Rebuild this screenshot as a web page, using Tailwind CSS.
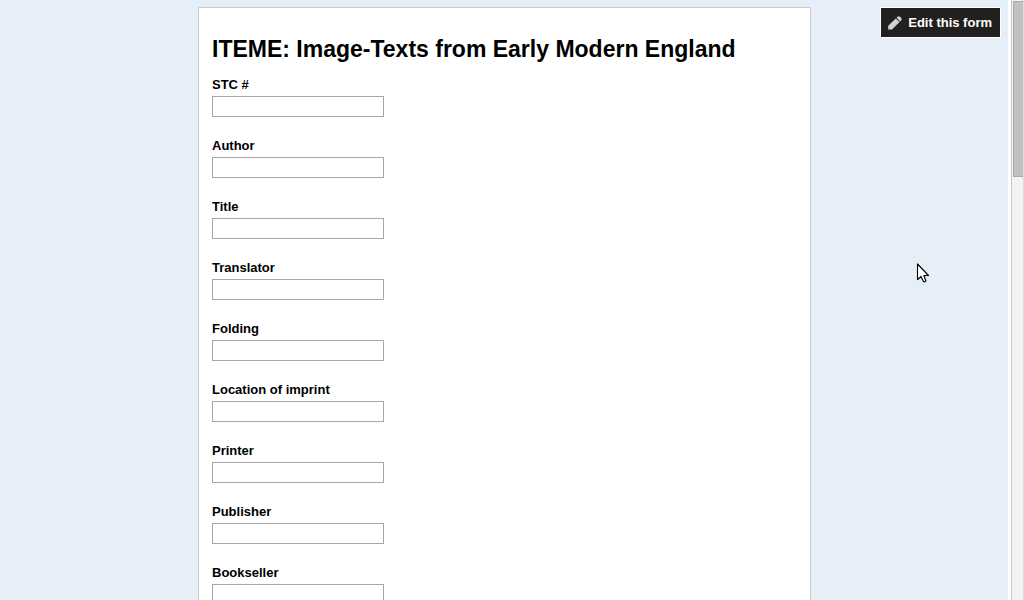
<!DOCTYPE html>
<html lang="en">
<head>
  <meta charset="utf-8">
  <meta name="viewport" content="width=device-width, initial-scale=1">
  <title>ITEME: Image-Texts from Early Modern England</title>
  <script src="https://cdn.jsdelivr.net/npm/@tailwindcss/browser@4"></script>
</head>
<body class="flex h-screen overflow-hidden bg-white font-['Liberation_Sans',Arial,sans-serif] text-[13px] leading-4 text-black">
  <div class="relative flex-1 overflow-hidden bg-[#e6eef8] pt-[7px] pl-px">
    <!-- Form -->
    <main class="mx-auto max-w-[613px] border border-[#cccccc] bg-white px-[13px] pt-[25px] pb-8">
      <h1 class="text-[23px] leading-8 font-bold">ITEME: Image-Texts from Early Modern England</h1>
      <form class="mt-3 space-y-[21px]">
        <div>
          <label for="stc" class="block pb-[3px] font-bold">STC #</label>
          <input type="text" id="stc" class="block h-[21px] w-[172px] border border-[#a6a6a6] bg-white px-1">
        </div>
        <div>
          <label for="author" class="block pb-[3px] font-bold">Author</label>
          <input type="text" id="author" class="block h-[21px] w-[172px] border border-[#a6a6a6] bg-white px-1">
        </div>
        <div>
          <label for="title" class="block pb-[3px] font-bold">Title</label>
          <input type="text" id="title" class="block h-[21px] w-[172px] border border-[#a6a6a6] bg-white px-1">
        </div>
        <div>
          <label for="translator" class="block pb-[3px] font-bold">Translator</label>
          <input type="text" id="translator" class="block h-[21px] w-[172px] border border-[#a6a6a6] bg-white px-1">
        </div>
        <div>
          <label for="folding" class="block pb-[3px] font-bold">Folding</label>
          <input type="text" id="folding" class="block h-[21px] w-[172px] border border-[#a6a6a6] bg-white px-1">
        </div>
        <div>
          <label for="location" class="block pb-[3px] font-bold">Location of imprint</label>
          <input type="text" id="location" class="block h-[21px] w-[172px] border border-[#a6a6a6] bg-white px-1">
        </div>
        <div>
          <label for="printer" class="block pb-[3px] font-bold">Printer</label>
          <input type="text" id="printer" class="block h-[21px] w-[172px] border border-[#a6a6a6] bg-white px-1">
        </div>
        <div>
          <label for="publisher" class="block pb-[3px] font-bold">Publisher</label>
          <input type="text" id="publisher" class="block h-[21px] w-[172px] border border-[#a6a6a6] bg-white px-1">
        </div>
        <div>
          <label for="bookseller" class="block pb-[3px] font-bold">Bookseller</label>
          <input type="text" id="bookseller" class="block h-[21px] w-[172px] border border-[#a6a6a6] bg-white px-1">
        </div>
      </form>
    </main>

    <!-- Edit button, floats over the page -->
    <a href="#" class="absolute top-[7px] right-[7px] flex h-[31px] items-center gap-[6px] border border-white bg-[#21201e] pr-2 pl-[7px] font-bold whitespace-nowrap text-white">
      <svg class="size-[14px]" viewBox="0 0 14 14" fill="#d2d2d2" aria-hidden="true">
        <path d="M0.2 13.6 V9.8 L7.8 2.4 L11.6 6 L4 13.6 Z"/>
        <path d="M8.5 1.8 L9.6 0.8 Q10.8 -0.1 12 0.8 L13.2 2 Q14.1 3.3 13.2 4.4 L12.2 5.4 Z"/>
      </svg>
      Edit this form
    </a>

    <!-- Mouse pointer -->
    <svg class="pointer-events-none absolute top-[263px] left-[916px] h-[22px] w-[15px]" viewBox="0 0 15 22" aria-hidden="true">
      <path d="M2.5 2 V17.5 L6 14.5 L8.5 20 L11 19 L9 13.5 H13.5 Z" fill="#000" opacity="0.2"/>
      <path d="M1.5 1 V16.5 L5 13.4 L7.3 18.2 Q8.8 19.2 9.8 17.8 L7.8 12.5 H12.5 Z" fill="#fff" stroke="#000" stroke-width="1.1" stroke-linejoin="round"/>
    </svg>
  </div>

  <!-- Scrollbar -->
  <div class="ml-[3px] w-[13px] shrink-0 border-r border-l border-r-[#dedede] border-l-[#c6c6c6] bg-[#f3f3f3] pt-px pl-px">
    <div class="h-44 border border-r-0 border-[#aaaaaa] bg-[#c1c1c1]"></div>
  </div>
</body>
</html>
